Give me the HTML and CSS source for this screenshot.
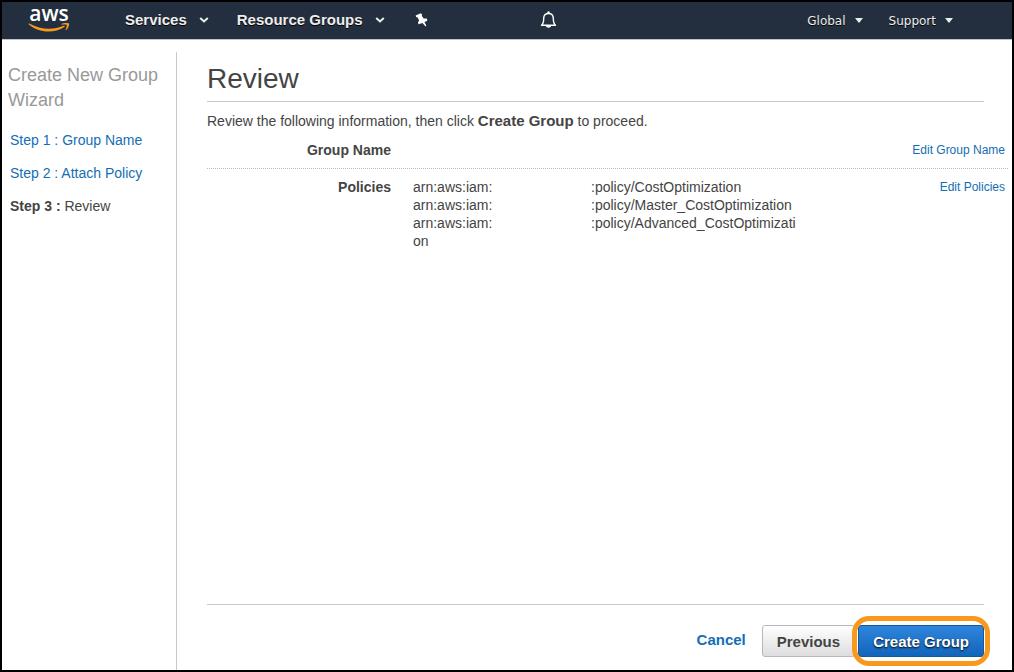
FILE: index.html
```html
<!DOCTYPE html>
<html lang="en">
<head>
<meta charset="utf-8">
<meta name="viewport" content="width=device-width, initial-scale=1">
<title>Create New Group Wizard</title>
<link rel="stylesheet" href="styles.css">
</head>
<body>
<header class="topbar">
  <a class="logo" href="#" aria-label="aws home">
    <span class="logo-text">aws</span>
    <svg class="logo-smile" width="42" height="10" viewBox="0 0 42 10" aria-hidden="true">
      <path d="M.6 1.200C.2.800.700.300 1.300.600 13 7 25 7.300 35.600 2.800 36.600 2.400 37.300 3.200 36.400 3.900 26 10.700 10.500 10 .6 1.200Z" fill="#f7981f"/>
      <path d="M33.500 1C36-.4 40.500-.3 41 .5 41.500 1.600 40.300 5.300 38.200 7 37.700 7.400 37.400 7.100 37.600 6.600 38.400 4.700 39.100 2.700 38.700 2 38.200 1.300 35.800 1.400 34 1.600 33.300 1.700 33.100 1.300 33.500 1Z" fill="#f7981f"/>
    </svg>
  </a>
  <nav class="nav-left">
    <button class="nav-main" type="button">Services
      <svg width="10" height="6" viewBox="0 0 10 6" aria-hidden="true"><path d="M1.200 1 5 4.500 8.800 1" fill="none" stroke="#eee" stroke-width="2"/></svg>
    </button>
    <button class="nav-main" type="button">Resource Groups
      <svg width="10" height="6" viewBox="0 0 10 6" aria-hidden="true"><path d="M1.200 1 5 4.500 8.800 1" fill="none" stroke="#eee" stroke-width="2"/></svg>
    </button>
    <button class="nav-icon" type="button" aria-label="Pin shortcuts">
      <svg width="13" height="14" viewBox="0 0 13 14" aria-hidden="true"><path d="M.6 2.600 5.800.3 7.300 1.700 6.700 2.700 8.700 5.400 11.800 5.600 12.300 7.700 9.500 9 11.300 12.700 10.500 13.400 7.500 9.900 3.600 11.300 2.900 9.600 4.100 7.400 2.500 4.200 1.300 4.300Z" fill="#fff"/></svg>
    </button>
  </nav>
  <button class="nav-icon nav-bell" type="button" aria-label="Notifications">
    <svg width="17" height="18" viewBox="0 0 17 18" aria-hidden="true"><path d="M1.500 14.200C3.500 12.500 3.700 11 3.700 7.500 3.700 4.300 5.500 2.500 8.500 2.500S13.300 4.300 13.300 7.500C13.300 11 13.500 12.500 15.500 14.200Z" fill="none" stroke="#fff" stroke-width="1.400" stroke-linejoin="round"/><path d="M7.300 2.500V1.500a1.200 1.200 0 0 1 2.400 0v1ZM5.800 14.500h5.400c-.3 3-5.100 3-5.400 0Z" fill="#fff"/></svg>
  </button>
  <nav class="nav-right">
    <button class="nav-sub" type="button">Global
      <svg width="8" height="5" viewBox="0 0 8 5" aria-hidden="true"><path d="M0 0H8L4 5Z" fill="#eee"/></svg>
    </button>
    <button class="nav-sub" type="button">Support
      <svg width="8" height="5" viewBox="0 0 8 5" aria-hidden="true"><path d="M0 0H8L4 5Z" fill="#eee"/></svg>
    </button>
  </nav>
</header>
<div class="wizard">
  <aside class="sidebar">
    <h2 class="wizard-title">Create New Group Wizard</h2>
    <ol class="steps">
      <li><a href="#">Step 1 : Group Name</a></li>
      <li><a href="#">Step 2 : Attach Policy</a></li>
      <li aria-current="step"><b>Step 3 :</b> Review</li>
    </ol>
  </aside>
  <main class="content">
    <h1 class="page-title">Review</h1>
    <p class="intro">Review the following information, then click <b>Create Group</b> to proceed.</p>
    <dl class="review">
      <div class="review-row">
        <dt>Group Name</dt>
        <dd></dd>
        <dd class="edit"><a href="#">Edit Group Name</a></dd>
      </div>
      <div class="review-row">
        <dt>Policies</dt>
        <dd>
          <div class="arn"><span>arn:aws:iam:</span><span>:policy/CostOptimization</span></div>
          <div class="arn"><span>arn:aws:iam:</span><span>:policy/Master_CostOptimization</span></div>
          <div class="arn"><span>arn:aws:iam:</span><span>:policy/Advanced_CostOptimizati</span></div>
          <div>on</div>
        </dd>
        <dd class="edit"><a href="#">Edit Policies</a></dd>
      </div>
    </dl>
    <footer class="footer">
      <div class="actions">
        <a class="cancel" href="#">Cancel</a>
        <button class="btn" type="button">Previous</button>
        <span class="highlight"><button class="btn btn-primary" type="button">Create Group</button></span>
      </div>
    </footer>
  </main>
</div>
</body>
</html>
```
FILE: styles.css
```css
* { box-sizing: border-box; }
body {
  margin: 0;
  min-height: 100vh;
  border: 2px solid #000;
  display: flex;
  flex-direction: column;
  background: #fff;
  color: #444;
  font: 14px/18px "Liberation Sans", Arial, sans-serif;
}
h1, h2, p, ol, dl, dd { margin: 0; padding: 0; font-weight: normal; }
a { color: #146eb4; text-decoration: none; }
button { font-family: inherit; cursor: pointer; }

.topbar {
  display: flex;
  align-items: center;
  height: 38px;
  padding-bottom: 2px;
  background: #232f3e;
  border-bottom: 1px solid #c0c3c8;
}
.logo {
  display: flex;
  flex-direction: column;
  align-items: center;
  width: 42px;
  margin-left: 26px;
  padding-bottom: 2px;
}
.logo-text { color: #fff; font: 600 21px/19px "Open Sans", sans-serif; }
.nav-left { display: flex; align-items: center; gap: 28px; margin-left: 55px; }
.nav-main, .nav-sub, .nav-icon {
  display: flex;
  align-items: center;
  padding: 0;
  border: 0;
  background: none;
  color: #eee;
  text-shadow: 0 1px 0 #000;
}
.nav-main { gap: 12px; font-size: 15px; font-weight: bold; }
.nav-main + .nav-icon { margin-left: 2px; }
.nav-sub { gap: 9px; font: 12px/16px "DejaVu Sans", Verdana, sans-serif; }
.nav-bell { margin-left: 112px; }
.nav-right { display: flex; gap: 26px; margin-left: auto; padding: 2px 59px 0 0; }

.wizard { flex: 1; display: flex; padding-top: 12px; }
.sidebar {
  flex: none;
  width: 175px;
  padding: 11px 8px 0 6px;
  border-right: 1px solid #c8c8c8;
}
.wizard-title { color: #999; font-size: 18px; line-height: 25px; }
.steps {
  display: flex;
  flex-direction: column;
  gap: 15px;
  margin-top: 18px;
  padding-left: 2px;
  list-style: none;
}
.content {
  flex: 1;
  display: flex;
  flex-direction: column;
  padding: 10px 4px 0 30px;
}
.page-title {
  margin-right: 24px;
  padding-bottom: 5px;
  border-bottom: 1px solid #c8c8c8;
  font-size: 28px;
  line-height: 34px;
}
.intro { margin-top: 10px; }
.intro b { font-size: 15px; }
.review { margin-top: 2px; }
.review-row {
  display: grid;
  grid-template-columns: 184px 1fr auto;
  column-gap: 22px;
  padding: 9px 0;
}
.review-row + .review-row { border-top: 1px dotted #bbb; }
.review-row dt { text-align: right; font-weight: bold; }
.arn { display: grid; grid-template-columns: 178px 1fr; }
.edit { padding-right: 3px; font-size: 12px; }
.footer {
  margin: auto 24px 0 0;
  border-top: 1px solid #c8c8c8;
}
.actions {
  display: flex;
  align-items: center;
  justify-content: flex-end;
  margin-right: -1px;
  padding: 16px 0 9px;
}
.cancel { margin-right: 16px; padding-bottom: 3px; font-size: 15px; font-weight: bold; }
.btn {
  height: 32px;
  padding: 0 14px;
  border: 1px solid #b8b8b8;
  border-radius: 3px;
  background: linear-gradient(#fff, #ddd);
  color: #444;
  font-size: 15px;
  font-weight: bold;
}
.btn-primary {
  border-color: #1159a3;
  background: linear-gradient(#2f84dc, #1166bb);
  color: #fff;
  text-shadow: 0 1px 2px #000;
}
.highlight {
  display: flex;
  margin-left: 2px;
  padding: 4px 1px;
  border-radius: 12px;
  background: #fff;
  outline: 5px solid #f8981d;
}
```
